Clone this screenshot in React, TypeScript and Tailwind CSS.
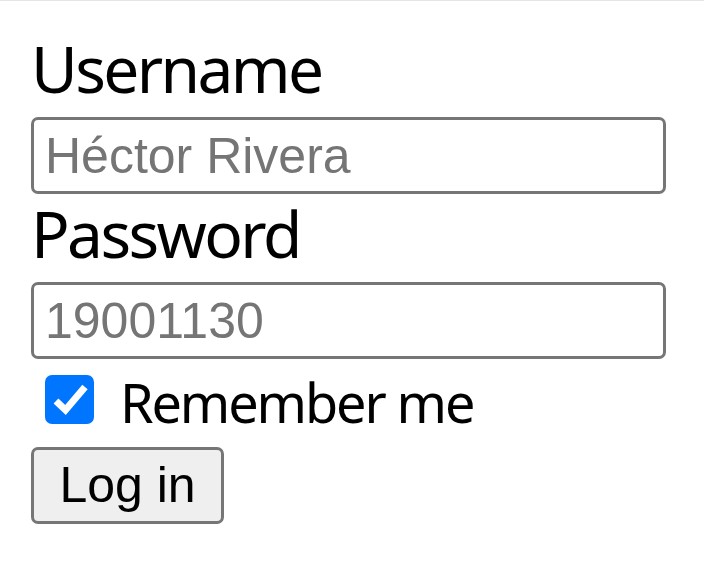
import React from 'react';

function App() {
  return (
    <div className="min-h-screen bg-white border-t border-[#e5e5e5]">
      <form className="pt-[28px] px-[31px] flex flex-col items-start">
        {/* Username */}
        <label className="block h-[88px] text-[64px] leading-[80px] tracking-[-2.6px] text-black font-['Noto_Sans',sans-serif]">
          Username
        </label>
        <input
          type="text"
          placeholder="Héctor Rivera"
          className="w-[635px] h-[77px] border-[3px] border-[#767676] rounded-[7px] pl-[11px] text-[50px] font-['Liberation_Sans',Arial,sans-serif] placeholder:text-[#757575] outline-none"
        />

        {/* Password */}
        <label className="block h-[88px] text-[64px] leading-[80px] tracking-[-2.6px] text-black font-['Noto_Sans',sans-serif]">
          Password
        </label>
        <input
          type="text"
          placeholder="19001130"
          className="w-[635px] h-[77px] border-[3px] border-[#767676] rounded-[7px] pl-[11px] text-[50px] font-['Liberation_Sans',Arial,sans-serif] placeholder:text-[#757575] outline-none"
        />

        {/* Remember me */}
        <div className="flex items-start h-[88px]">
          <span className="mt-[16px] ml-[14px] w-[49px] h-[49px] rounded-[7px] bg-[#0075ff] flex items-center justify-center">
            <svg width="49" height="49" viewBox="0 0 49 49">
              <polyline points="11,26 20.5,35 40,12" fill="none" stroke="white" strokeWidth="7" />
            </svg>
          </span>
          <span className="ml-[26px] text-[54px] leading-[86px] tracking-[-2.1px] text-black font-['Noto_Sans',sans-serif]">
            Remember me
          </span>
        </div>

        {/* Submit */}
        <button
          type="button"
          className="w-[193px] h-[77px] border-[3px] border-[#767676] rounded-[7px] bg-[#efefef] text-[50px] text-black font-['Liberation_Sans',Arial,sans-serif] flex items-center justify-center"
        >
          Log in
        </button>
      </form>
    </div>
  );
}

export default App;
